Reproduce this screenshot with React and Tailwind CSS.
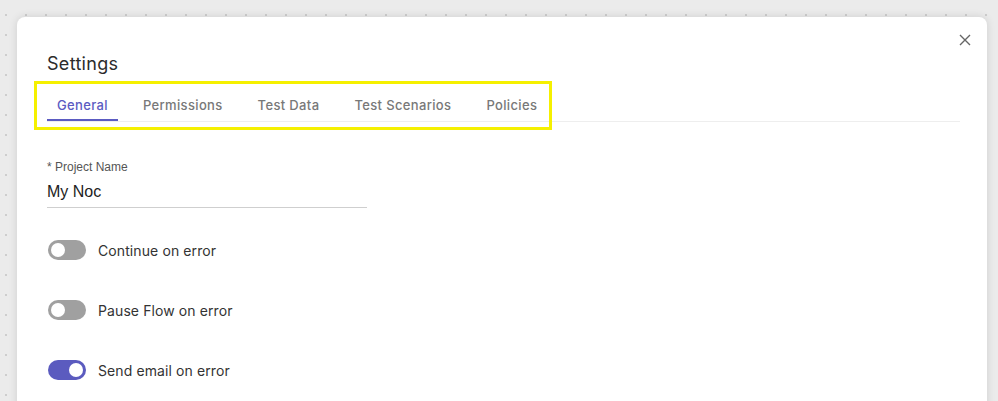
import React from "react";

function Toggle({ on, label }) {
  return (
    <div className="flex items-center h-[20px]">
      <div
        className={`relative w-[38px] h-[20px] rounded-full ${on ? "bg-[#5b5bbf]" : "bg-[#a0a0a0]"}`}
      >
        <div
          className={`absolute top-[3px] w-[14px] h-[14px] rounded-full bg-white ${on ? "left-[21px]" : "left-[3px]"}`}
        />
      </div>
      <span className="ml-[12px] text-[14px] tracking-[0.1px] text-[#333] font-['Inter',sans-serif]">{label}</span>
    </div>
  );
}

export default function App() {
  const tabs = ["General", "Permissions", "Test Data", "Test Scenarios", "Policies"];
  return (
    <div className="relative w-[998px] h-[401px] overflow-hidden bg-[#ebebeb] bg-[radial-gradient(circle,#cdcdcd_0.8px,transparent_1px)] bg-[length:20px_20px] bg-[position:-4px_5px] font-['Inter',sans-serif]">
      <div className="ml-[17px] mt-[17px] w-[970px] h-[420px] bg-white rounded-t-[8px] shadow-[0_0_8px_rgba(0,0,0,0.12)] relative pl-[30px] pr-[27px] pt-[35px]">
        <button className="absolute right-[14px] top-[15px] w-[16px] h-[16px] flex items-center justify-center text-[#666]">
          <svg width="12" height="12" viewBox="0 0 12 12" fill="none" stroke="currentColor" strokeWidth="1.4">
            <path d="M1 1L11 11M11 1L1 11" />
          </svg>
        </button>
        <h2 className="text-[18px] leading-[24px] tracking-[0.3px] text-[#2b2b2b] font-normal">Settings</h2>
        <div className="mt-[20px] flex border-b border-[#eeeeee] gap-[15px]">
          {tabs.map((t, i) => (
            <div
              key={t}
              className={`px-[10px] pb-[5px] text-[13px] leading-[18px] tracking-[0.35px] font-medium border-b-2 ${
                i === 0 ? "text-[#5b5bc2] border-[#5b5bc2]" : "text-[#787878] border-transparent"
              }`}
            >
              {t}
            </div>
          ))}
        </div>
        <div className="mt-[38px] w-[320px] font-['Liberation_Sans',Arial,sans-serif]">
          <div className="text-[12px] leading-[14px] text-[#555]">* Project Name</div>
          <div className="mt-[8px] text-[16px] leading-[20px] text-[#222] pb-[5px] border-b border-[#cfcfcf]">My Noc</div>
        </div>
        <div className="mt-[32px] flex flex-col gap-[40px] pl-[1px]">
          <Toggle on={false} label="Continue on error" />
          <Toggle on={false} label="Pause Flow on error" />
          <Toggle on={true} label="Send email on error" />
        </div>
      </div>
      <div className="absolute left-[34px] top-[81px] w-[518px] h-[49px] border-[3px] border-[#f5f000] pointer-events-none" />
    </div>
  );
}
